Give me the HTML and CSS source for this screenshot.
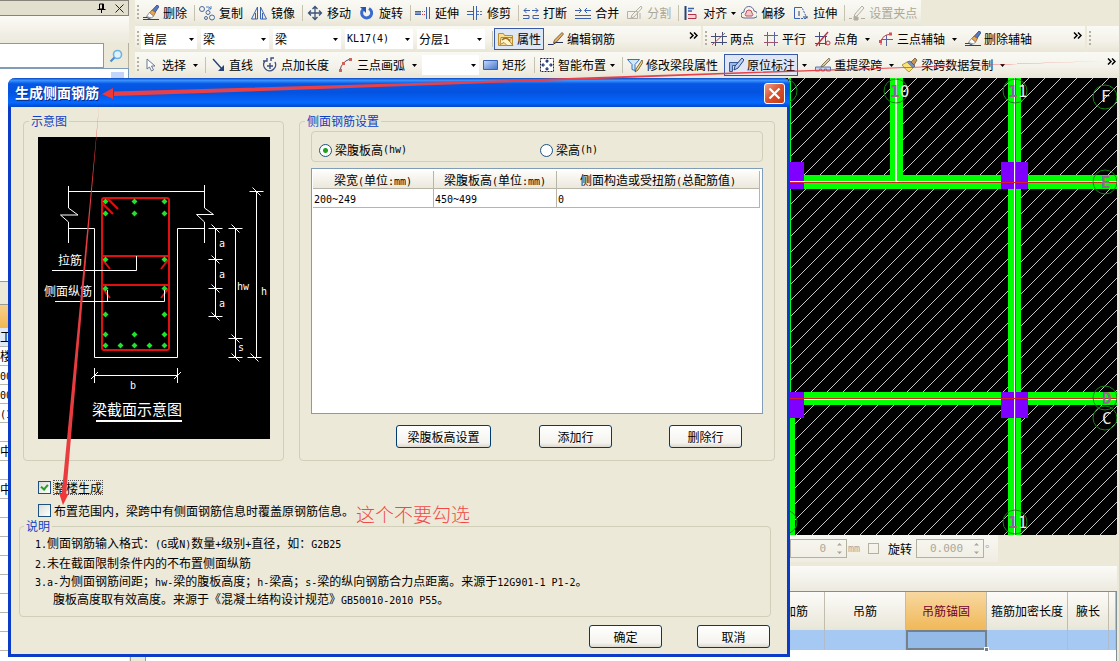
FILE: index.html
```
<!DOCTYPE html>
<html lang="zh-CN">
<head>
<meta charset="utf-8">
<title>生成侧面钢筋</title>
<link rel="stylesheet" href="styles.css">
</head>
<body>
<svg class="defs" width="0" height="0" aria-hidden="true">
  <defs>
    <symbol id="caret" viewBox="0 0 5 3"><path d="M0 0h5L2.500 3z" fill="#000"/></symbol>
    <symbol id="more" viewBox="0 0 9 7"><path d="M1 .5l3 3-3 3M5 .5l3 3-3 3" fill="none" stroke="#000" stroke-width="1.500"/></symbol>
    <symbol id="brush" viewBox="0 0 16 16"><path d="M14 0l2 1.500-5 7.500-3-2.500z" fill="#5a7ac0" stroke="#28407c" stroke-width=".8"/><path d="M9 5l3.500 2.500-2 3.500-4-3z" fill="#e8a858" stroke="#8a5a28" stroke-width=".7"/><path d="M6.500 7.500l4 3.500-2 2-5-1.500z" fill="#fff" stroke="#777" stroke-width=".8"/><path d="M0 12.500l4 0 4 2H16M0 14.500h9" fill="none" stroke="#28407c"/></symbol>
    <symbol id="pen" viewBox="0 0 16 16"><path d="M14 1.500l1.500 1.500-7 8-3 1 1-3z" fill="#e0b070" stroke="#6a4a20" stroke-width=".8"/><path d="M0 13.500h5l3-2h7" fill="none" stroke="#28305c"/></symbol>
    <g id="tick"><path d="M-7 0H7M-4 -4L4 4" /></g>
    <path id="dot" d="M0-3L3 0 0 3-3 0z"/>
  </defs>
</svg>

<div class="app">
  <aside class="side">
    <div class="side-title">
      <button aria-label="固定"><svg width="9" height="10" viewBox="0 0 9 10"><path d="M2.500 1h4v5h-4zM.5 6.500h8M4.500 7v3M5.500 1v5" fill="none" stroke="#000"/></svg></button>
      <button aria-label="关闭面板"><svg width="9" height="9" viewBox="0 0 9 9"><path d="M.5.5l8 8M8.500.5l-8 8" stroke="#222"/></svg></button>
    </div>
    <div class="side-gap"></div>
    <div class="side-search">
      <input type="text" aria-label="搜索构件">
      <button aria-label="搜索"><svg width="14" height="14" viewBox="0 0 14 14"><circle cx="8.500" cy="5.500" r="4" fill="#dff2fc" stroke="#6cb4e4" stroke-width="1.600"/><path d="M5.500 8.500L1.500 12.500" stroke="#4a8cd0" stroke-width="2.200"/></svg></button>
    </div>
    <div class="side-list"><span class="scroll-up"><svg width="7" height="4" viewBox="0 0 7 4"><path d="M.5 3.500l3-3 3 3" fill="none" stroke="#3c5a9c" stroke-width="1.500"/></svg></span></div>
    <div class="side-bar"></div>
    <table class="props">
      <tbody>
        <tr class="props-head"><th></th></tr>
        <tr class="current"><td>工</td></tr>
        <tr><td>楼层</td></tr>
        <tr><td><span class="m">00</span></td></tr>
        <tr><td><span class="m">00</span></td></tr>
        <tr><td><span class="m">(10</span></td></tr>
        <tr><td></td></tr>
        <tr><td>中</td></tr>
        <tr><td></td></tr>
        <tr><td>中</td></tr>
        <tr><td></td></tr><tr><td></td></tr><tr><td></td></tr><tr><td></td></tr>
        <tr><td></td></tr><tr><td></td></tr><tr><td></td></tr><tr><td></td></tr>
      </tbody>
    </table>
  </aside>

  <main class="main">
    <div class="bar edit-bar">
      <div class="strip" role="toolbar" aria-label="编辑">
        <i class="grip"></i>
        <button class="tool"><svg><use href="#brush"/></svg>删除</button><i class="sep"></i>
        <button class="tool"><svg viewBox="0 0 16 16" fill="none" stroke="#4a6a9c"><circle cx="3" cy="4" r="2.500"/><circle cx="9" cy="7.500" r="2"/><circle cx="13" cy="12.500" r="2.500"/><circle cx="7" cy="13" r="1.500"/><path d="M7 2h3l2 2M12 1v3H9" stroke="#5a80c8"/></svg>复制</button>
        <button class="tool"><svg viewBox="0 0 16 16" fill="none" stroke="#3a62b0"><path d="M6.500 2v12h-6zM9.500 2v12h6zM4.500 8v6M11.500 8v6"/></svg>镜像</button><i class="sep"></i>
        <button class="tool"><svg viewBox="0 0 16 16" fill="none" stroke="#3c5478" stroke-width="1.300"><path d="M8 2v12M2 8h12M5.500 4L8 1.500 10.500 4M5.500 12L8 14.500 10.500 12M4 5.500L1.500 8 4 10.500M12 5.500L14.500 8 12 10.500"/></svg>移动</button>
        <button class="tool"><svg viewBox="0 0 16 16"><path d="M4 4.500a5 5 0 1 0 6-1" fill="none" stroke="#3a6ad0" stroke-width="3"/><path d="M1 2h6v6z" fill="#2a52b0"/></svg>旋转</button><i class="sep"></i>
        <button class="tool"><svg viewBox="0 0 16 16" fill="none" stroke="#3a62b0"><path d="M0 6.500h6M0 9.500h6M11.500 2v12M14.500 2v12"/><path d="M0 8h6" stroke="#28407c"/><path d="M7 6.500h4M7 9.500h4" stroke="#c04040" stroke-dasharray="1 1"/></svg>延伸</button>
        <button class="tool"><svg viewBox="0 0 16 16" fill="none" stroke="#3a62b0"><path d="M0 6.500h6M0 9.500h6M6.500 1v14M9.500 1v14"/><path d="M10 6.500h6M10 9.500h6" stroke="#5a7aa8" stroke-dasharray="2 1"/></svg>修剪</button><i class="sep"></i>
        <button class="tool"><svg viewBox="0 0 16 16" fill="none" stroke="#3a62b0"><path d="M0 10.500h6v3H0M16 10.500h-6v3h6M1 5.500h6M9 5.500h6M3.500 3L1 5.500 3.500 8M12.500 3L15 5.500 12.500 8"/></svg>打断</button>
        <button class="tool"><svg viewBox="0 0 16 16" fill="none" stroke="#3a62b0"><path d="M0 10.500h16M0 13.500h16M0 5.500h6M10 5.500h6M4 3l2.500 2.500L4 8M12 3L9.500 5.500 12 8"/></svg>合并</button>
        <button class="tool" disabled><svg viewBox="0 0 16 16" fill="none" stroke="#b4b2a4"><path d="M.5 6.500h10v7H.5zM14 1L5 10l-1 3 3-1 8-9zM13 8v6"/></svg>分割</button><i class="sep"></i>
        <button class="tool tight"><svg viewBox="0 0 16 16"><path d="M2.500 1v14" stroke="#28407c" stroke-width="2"/><path d="M5 3.500h6M5 6h4" stroke="#3a62b0" stroke-width="1.500"/><path d="M5 9.500h8v4H5" fill="#f4d8d8" stroke="#b03048"/></svg>对齐<svg class="caret"><use href="#caret"/></svg></button>
        <button class="tool"><svg viewBox="0 0 16 16" fill="none"><path d="M3 13a3 3 0 0 1 0-6 5 5 0 0 1 10-1 3.500 3.500 0 0 1 0 7z" stroke="#5a6a94"/><path d="M5 11a2 2 0 0 1 0-3 3 3 0 0 1 6 0 2 2 0 0 1 0 3z" stroke="#c05060" fill="#f0c8c8"/></svg>偏移</button>
        <button class="tool"><svg viewBox="0 0 16 16" fill="none" stroke="#3a62b0"><path d="M7 2.500H1.500v11H7"/><path d="M7 2.500h2l5 11H7" stroke-dasharray="2 1"/><path d="M6 6v5M10 12h5" stroke="#28407c"/></svg>拉伸</button><i class="sep"></i>
        <button class="tool" disabled><svg viewBox="0 0 16 16" fill="none" stroke="#b0aea0"><path d="M13 1L6 9l-1 3 3-1 7-8zM0 13.500h3M12 13.500h4"/><path d="M5 12h4v3H5z" fill="#b0aea0"/></svg>设置夹点</button>
      </div>
    </div>

    <div class="bar">
      <div class="strip strip-member" role="toolbar" aria-label="构件">
        <i class="grip"></i>
        <span class="combo combo-floor"><select aria-label="楼层"><option>首层</option></select><svg class="caret"><use href="#caret"/></svg></span>
        <span class="combo"><select aria-label="构件大类"><option>梁</option></select><svg class="caret"><use href="#caret"/></svg></span>
        <span class="combo"><select aria-label="构件类型"><option>梁</option></select><svg class="caret"><use href="#caret"/></svg></span>
        <span class="combo latin"><select aria-label="构件名称"><option>KL17(4)</option></select><svg class="caret"><use href="#caret"/></svg></span>
        <span class="combo"><select aria-label="分层"><option>分层1</option></select><svg class="caret"><use href="#caret"/></svg></span>
        <i class="sep"></i>
        <button class="tool pressed"><svg viewBox="0 0 16 16"><path d="M.5 2.500h5l1 2h8v10H.5z" fill="#f8e090" stroke="#b89030"/><path d="M3 6.500h11l-3 3 4 5H9l-3-3-4 2z" fill="#fff4c8" stroke="#a06c20" stroke-width=".8"/><path d="M4 9q4-4 8 1" fill="none" stroke="#a06c20" stroke-width="1.500"/></svg>属性</button>
        <button class="tool"><svg><use href="#pen"/></svg>编辑钢筋</button>
        <button class="more" aria-label="更多"><svg><use href="#more"/></svg></button>
      </div>
      <div class="strip strip-axis" role="toolbar" aria-label="辅助轴线">
        <i class="grip"></i>
        <button class="tool"><svg viewBox="0 0 16 16" fill="none" stroke="#444c78"><path d="M4.500 2v13M11.500 1v13M0 5.500h16M0 11.500h16"/><path d="M1 14L14 2" stroke="#a06060"/></svg>两点</button>
        <button class="tool"><svg viewBox="0 0 16 16" fill="none" stroke="#5a62a0"><path d="M4.500 1v14M11.500 1v14"/><path d="M1 4.500h14M1 11.500h14" stroke="#a05070"/></svg>平行</button>
        <button class="tool split"><svg viewBox="0 0 16 16" fill="none" stroke="#444c88"><path d="M4.500 1v14M0 5.500h12M0 12.500h10M10.500 6v8"/><path d="M1 15L13 1" stroke="#c03040" stroke-width="1.400"/><circle cx="13" cy="12" r="2" stroke="#c03040"/></svg>点角<svg class="caret"><use href="#caret"/></svg></button>
        <button class="tool split"><svg viewBox="0 0 16 16" fill="none" stroke="#5a62a0"><path d="M8.500 4v11M3 8.500h12"/><path d="M3 14Q2 4 13 3" stroke="#c04858"/><path d="M1 9h3v3H1zM11 1.500h3v3h-3z" fill="#d05060" stroke="none"/></svg>三点辅轴<svg class="caret"><use href="#caret"/></svg></button>
        <button class="tool"><svg><use href="#brush"/></svg>删除辅轴</button>
        <button class="more" aria-label="更多"><svg><use href="#more"/></svg></button>
      </div>
      <div class="strip strip-rest"><i class="grip"></i></div>
    </div>

    <div class="bar">
      <div class="strip strip-draw" role="toolbar" aria-label="绘图">
        <i class="grip"></i>
        <button class="tool split"><svg viewBox="0 0 16 16"><path d="M4 2v10l2.500-2 2 4 2-1-2-4h3.500z" fill="#fff" stroke="#687890"/></svg>选择<svg class="caret"><use href="#caret"/></svg></button><i class="sep"></i>
        <button class="tool"><svg viewBox="0 0 16 16"><path d="M3 2l9 10" stroke="#28407c" stroke-width="1.400"/><path d="M14 8v6H8z" fill="#28407c"/></svg>直线</button>
        <button class="tool"><svg viewBox="0 0 16 16" fill="none" stroke="#3c5080" stroke-width="1.400"><path d="M3 4a6 6 0 1 0 10 1M8 6v6M5 9h6M1 4h4V1M9 4V1h3"/></svg>点加长度</button>
        <button class="tool split"><svg viewBox="0 0 16 16"><path d="M2 14Q3 5 12 2" fill="none" stroke="#605060"/><path d="M1 12h3v3H1zM4 5h3v3H4zM11 1h3v3h-3z" fill="#d06058"/></svg>三点画弧<svg class="caret"><use href="#caret"/></svg></button>
        <span class="combo combo-arc"><select aria-label="弧线方式"><option></option></select><svg class="caret"><use href="#caret"/></svg></span>
        <button class="tool"><svg viewBox="0 0 16 16"><defs><linearGradient id="rectfill" x2="1" y2="1"><stop stop-color="#c8dcfa"/><stop offset="1" stop-color="#4474cc"/></linearGradient></defs><path d="M.5 3.500h14v9H.5z" fill="url(#rectfill)" stroke="#3a62b0"/></svg>矩形</button><i class="sep"></i>
        <button class="tool tight"><svg viewBox="0 0 16 16"><path d="M1.500 1.500h13v13h-13z" fill="#fff" stroke="#223" stroke-dasharray="2 1"/><path d="M8 3v3M8 10v3M3 8h3M10 8h3M6.500 4.500L8 3l1.500 1.500M6.500 11.500L8 13l1.500-1.500M4.500 6.500L3 8l1.500 1.500M11.500 6.500L13 8l-1.500 1.500" fill="none" stroke="#28407c" stroke-width="1.200"/></svg>智能布置<svg class="caret"><use href="#caret"/></svg></button><i class="sep"></i>
        <button class="tool"><svg viewBox="0 0 16 16"><path d="M.5 2.500h12l-4.500 5v6l-3-1v-5z" fill="#cfe8fa" stroke="#3a72b8"/><path d="M15 3l-6 9-1 3 3-2 5-8z" fill="#f0d888" stroke="#604820" stroke-width=".8"/></svg>修改梁段属性</button>
        <button class="tool pressed"><svg viewBox="0 0 16 16"><path d="M1.500 5.500h9v3h-6v6h-3z" fill="#9cb8e8" stroke="#3a5a98"/><path d="M14 1L7 9l-1 4 4-2 6-8z" fill="#b8d0f4" stroke="#28407c"/></svg>原位标注</button>
        <button class="tool caret-only" aria-label="原位标注选项"><svg class="caret"><use href="#caret"/></svg></button>
        <button class="tool split"><svg viewBox="0 0 16 16"><path d="M.5 14v-4h15v4h-4v-2h-2v2h-3v-2h-2v2z" fill="#c4d4ec" stroke="#5a78a8"/><path d="M14 1L7 8l-1 2 3-1 6-6z" fill="#d8c8a0" stroke="#706040" stroke-width=".8"/></svg>重提梁跨<svg class="caret"><use href="#caret"/></svg></button>
        <button class="tool split"><svg viewBox="0 0 16 16"><path d="M13 1l2 2-3 5-3-3z" fill="#c89858" stroke="#604820" stroke-width=".7"/><path d="M8 4l5 5-2 2-6-6z" fill="#7890b8" stroke="#405078" stroke-width=".7"/><path d="M5 5l6 6-4 4Q3 12 0 8z" fill="#fae078" stroke="#a08020" stroke-width=".8"/></svg>梁跨数据复制<svg class="caret"><use href="#caret"/></svg></button>
        <button class="more" aria-label="更多"><svg><use href="#more"/></svg></button>
      </div>
    </div>

    <svg class="canvas" viewBox="130 78 987 457" preserveAspectRatio="xMaxYMin slice" role="img" aria-label="梁平面图">
      <defs>
        <pattern id="hatch" width="16" height="16" patternUnits="userSpaceOnUse" patternTransform="translate(3 0)">
          <path d="M-1 17L17-1M-1 1L1-1M15 17L17 15" stroke="#c8c8c8"/>
        </pattern>
      </defs>
      <rect x="130" y="78" width="987" height="600" fill="#000"/>
      <rect x="130" y="78" width="987" height="600" fill="url(#hatch)"/>
      <g fill="#00ff00">
        <path d="M789 78h2v320h-2zM782 418h13v260h-13z"/>
        <path d="M890 78h13v100h-13zM130 175h987v14H130zM130 392h987v13H130zM1008 78h13v600h-13z"/>
      </g>
      <path d="M896 78v103" stroke="#e8f4e0" stroke-width="2"/>
      <path d="M130 181.500h987M130 399.500h987M1014.500 78v600" stroke="#fff" fill="none"/>
      <g fill="#8000ff"><path d="M777 162h27v27h-27zM1001 162h27v27h-27zM777 392h27v26h-27zM1001 392h27v26h-27z"/></g>
      <path d="M777 181.500h27M1014.500 162v27M1014.500 392v26" stroke="#fff"/>
      <path d="M130 182.500h987M130 398.500h987M1015.500 78v600" stroke="#d82020" fill="none"/>
      <g fill="none" stroke="#148414">
        <circle cx="785" cy="91" r="12"/><circle cx="896" cy="91" r="12"/><circle cx="1015" cy="91" r="12"/>
        <circle cx="1105" cy="97" r="12"/><circle cx="1105" cy="182" r="12"/><circle cx="1105" cy="398" r="12"/><circle cx="1105" cy="418" r="12"/>
        <circle cx="785" cy="522" r="12"/><circle cx="1015" cy="522" r="12"/>
      </g>
      <g class="axis">
        <text x="890" y="97"><tspan class="dim">1</tspan>0</text>
        <text x="1008" y="97"><tspan class="dim">1</tspan>1</text>
        <text x="1008" y="528"><tspan class="dim">1</tspan>1</text>
        <text x="1101" y="102">F</text>
        <text x="1101" y="188" class="dim">E</text>
        <text x="1102" y="404" class="dim">D</text>
        <text x="1102" y="424">C</text>
      </g>
    </svg>

    <div class="status">
      <div class="status-strip">
        <span class="spin spin-offset"><input type="text" value="0" aria-label="偏移" disabled><svg width="5" height="13" viewBox="0 0 5 13"><path d="M0 3.500L2.500 1 5 3.500zM0 9.500h5L2.500 12z" fill="#a8a698"/></svg></span>
        <span class="unit m">mm</span>
        <label class="rotate"><input type="checkbox">旋转</label>
        <span class="spin spin-angle"><input type="text" value="0.000" aria-label="旋转角度" disabled><svg width="5" height="13" viewBox="0 0 5 13"><path d="M0 3.500L2.500 1 5 3.500zM0 9.500h5L2.500 12z" fill="#a8a698"/></svg></span>
        <span class="unit">°</span>
      </div>
    </div>
    <div class="lower-bar"></div>
    <div class="lower">
      <table class="spans">
        <colgroup><col><col class="c-mid"><col class="c-mid"><col class="c-mid"><col class="c-mid"><col class="c-short"><col class="c-end"></colgroup>
        <thead><tr><th></th><th>次梁加筋</th><th>吊筋</th><th class="hot">吊筋锚固</th><th>箍筋加密长度</th><th>腋长</th><th></th></tr></thead>
        <tbody><tr><td></td><td></td><td></td><td class="active"><i class="handle"></i></td><td></td><td></td><td></td></tr></tbody>
      </table>
      <i class="scroll-end"></i>
    </div>
  </main>
</div>

<section class="dialog" role="dialog" aria-labelledby="dlg-title">
  <header class="titlebar">
    <h1 id="dlg-title">生成侧面钢筋</h1>
    <button class="close" aria-label="关闭"><svg width="13" height="13" viewBox="0 0 13 13"><path d="M1.500 1.500l10 10M11.500 1.500l-10 10" stroke="#fff" stroke-width="2.200"/></svg></button>
  </header>
  <div class="dialog-body">
    <div class="panels">
      <fieldset class="group preview">
        <legend>示意图</legend>
        <svg class="diagram" width="232" height="302" viewBox="38 137 232 302" role="img" aria-label="梁截面示意图">
          <rect x="38" y="137" width="232" height="302" fill="#000"/>
          <g fill="none" stroke="#fff">
            <path d="M68.500 191.500h136M68.500 186v22l9.500 7H60.500l8 7v21M204.500 185v23l9 6.500h-17l8 7.500v21"/>
            <path d="M68.500 228.500h26v129h83v-129h27"/>
          </g>
          <g fill="none" stroke="#e01010" stroke-width="2">
            <rect x="102" y="198" width="67" height="152" rx="2"/>
            <path d="M102 256h67M102 285h67M107 198l11 11M102 203l11 11M103 260l7 9M168 260l-7 9M103 289l7 9M168 289l-7 9"/>
          </g>
          <g fill="#20e030">
            <use href="#dot" x="105.500" y="201.500"/><use href="#dot" x="134.500" y="201.500"/><use href="#dot" x="164.500" y="201.500"/>
            <use href="#dot" x="105.500" y="213.500"/><use href="#dot" x="134.500" y="213.500"/><use href="#dot" x="164.500" y="213.500"/>
            <use href="#dot" x="105.500" y="259.500"/><use href="#dot" x="164.500" y="259.500"/>
            <use href="#dot" x="105.500" y="288.500"/><use href="#dot" x="164.500" y="288.500"/>
            <use href="#dot" x="105.500" y="314.500"/><use href="#dot" x="164.500" y="314.500"/>
            <use href="#dot" x="105.500" y="334.500"/><use href="#dot" x="134.500" y="334.500"/><use href="#dot" x="164.500" y="334.500"/>
            <use href="#dot" x="105.500" y="345.500"/><use href="#dot" x="120.500" y="345.500"/><use href="#dot" x="134.500" y="345.500"/><use href="#dot" x="149.500" y="345.500"/><use href="#dot" x="164.500" y="345.500"/>
          </g>
          <g fill="none" stroke="#fff">
            <path d="M52 270.500h84.500V256M55 301.500h109.500V290M107.500 301V290"/>
            <path d="M215.500 228v88M235.500 228v130M256.500 191v167M94.500 375.500h83M94.500 368v15M177.500 368v15M91 379l7-7M174 379l7-7"/>
            <use href="#tick" x="215.500" y="228.500"/><use href="#tick" x="215.500" y="259.500"/><use href="#tick" x="215.500" y="288.500"/><use href="#tick" x="215.500" y="316.500"/>
            <use href="#tick" x="235.500" y="228.500"/><use href="#tick" x="235.500" y="338.500"/><use href="#tick" x="235.500" y="357.500"/>
            <use href="#tick" x="256.500" y="191.500"/><use href="#tick" x="254.500" y="357.500"/>
            <path d="M96 421h86" stroke-width="2"/>
          </g>
          <g class="diagram-text">
            <text x="58" y="265">拉筋</text><text x="44" y="296">侧面纵筋</text>
            <g class="diagram-latin">
              <text x="219" y="247">a</text><text x="219" y="278">a</text><text x="219" y="307">a</text>
              <text x="237" y="290">hw</text><text x="261" y="295">h</text><text x="238" y="351">s</text><text x="130" y="389">b</text>
            </g>
            <text class="diagram-title" x="92" y="415">梁截面示意图</text>
          </g>
        </svg>
      </fieldset>

      <fieldset class="group settings">
        <legend>侧面钢筋设置</legend>
        <div class="modes">
          <label><input type="radio" name="mode" checked>梁腹板高<span class="m">(hw)</span></label>
          <label><input type="radio" name="mode">梁高<span class="m">(h)</span></label>
        </div>
        <div class="grid-box">
          <table class="grid">
            <colgroup><col class="g-width"><col class="g-height"><col></colgroup>
            <thead><tr><th>梁宽<span class="m">(</span>单位<span class="m">:mm)</span></th><th>梁腹板高<span class="m">(</span>单位<span class="m">:mm)</span></th><th>侧面构造或受扭筋<span class="m">(</span>总配筋值<span class="m">)</span></th></tr></thead>
            <tbody><tr><td><span class="m">200~249</span></td><td><span class="m">450~499</span></td><td><span class="m">0</span></td></tr></tbody>
          </table>
        </div>
        <div class="grid-actions">
          <button class="btn btn-wide">梁腹板高设置</button>
          <button class="btn">添加行</button>
          <button class="btn">删除行</button>
        </div>
      </fieldset>
    </div>

    <div class="checks">
      <label><input type="checkbox" checked><span class="focus">整楼生成</span></label>
      <label><input type="checkbox"><span>布置范围内，梁跨中有侧面钢筋信息时覆盖原钢筋信息。</span></label>
    </div>

    <fieldset class="group notes">
      <legend>说明</legend>
      <p class="first"><span class="m">1.</span>侧面钢筋输入格式：<span class="m">(G</span>或<span class="m">N)</span>数量<span class="m">+</span>级别<span class="m">+</span>直径，如：<span class="m">G2B25</span></p>
      <p><span class="m">2.</span>未在截面限制条件内的不布置侧面纵筋</p>
      <p><span class="m">3.a-</span>为侧面钢筋间距；<span class="m">hw-</span>梁的腹板高度；<span class="m">h-</span>梁高；<span class="m">s-</span>梁的纵向钢筋合力点距离。来源于<span class="m">12G901-1 P1-2</span>。</p>
      <p class="cont">腹板高度取有效高度。来源于《混凝土结构设计规范》<span class="m">GB50010-2010 P55</span>。</p>
    </fieldset>

    <footer class="dialog-actions">
      <button class="btn">确定</button>
      <button class="btn">取消</button>
    </footer>
  </div>
</section>

<svg class="marks" width="1119" height="661" viewBox="0 0 1119 661" aria-hidden="true">
  <path d="M1105 61L746 72 450 82 114 91.500v4.500L450 84.500 746 73.500z" fill="#e84048"/>
  <path d="M102 94l11-6v11z" fill="#f03838"/>
  <path d="M99 107L61.500 496h4.500z" fill="#e83c40"/>
  <path d="M63 505l-4-12 9.500 1z" fill="#f03838"/>
</svg>
<p class="remark">这个不要勾选</p>
</body>
</html>
```

FILE: styles.css
```
* { box-sizing: border-box; }

body {
  margin: 0;
  height: 100vh;
  overflow: hidden;
  position: relative;
  background: #ece9d8;
  color: #000;
  font: 12px/14px "Noto Sans CJK SC", sans-serif;
}

button, input, select {
  margin: 0;
  padding: 0;
  border: 0;
  background: none;
  color: inherit;
  font: inherit;
}

table { border-collapse: separate; border-spacing: 0; table-layout: fixed; width: 100%; }
th, td { padding: 0; font-weight: normal; white-space: nowrap; overflow: hidden; }
svg { flex: none; display: block; }
.defs { position: absolute; }
.m { font-family: "DejaVu Sans Mono", monospace; font-size: 10px; line-height: 1; }

.app { display: flex; height: 100%; }

/* side panel */
.side { flex: none; width: 129px; overflow: hidden; background: #fff; }
.side-title {
  display: flex;
  justify-content: flex-end;
  align-items: center;
  gap: 9px;
  height: 16px;
  padding: 0 4px 0 0;
  background: #e2dfce;
  border: 1px solid #85837a;
  border-left: 0;
}
.side-gap { height: 27px; background: linear-gradient(#fbfaf6, #ece9dc); }
.side-search { display: flex; height: 26px; background: #ece9d8; border-bottom: 1px solid #7f9db9; }
.side-search input { flex: 1; min-width: 0; background: #fff; border: 1px solid #7f9db9; border-left: 0; }
.side-search button { width: 25px; display: grid; place-items: center; border-right: 1px solid #b4b09c; }
.side-list { height: 212px; padding: 3px 4px; display: flex; justify-content: flex-end; border-right: 1px solid #7f9db9; }
.scroll-up { width: 13px; height: 16px; display: grid; place-items: center; background: #c4d4fa; }
.side-bar { height: 24px; background: #ece9d8; border: 1px solid #9c9a8c; border-width: 1px 0; }
.props th { height: 23px; background: linear-gradient(#f8d08c, #f0b850); }
.props td { height: 19px; line-height: 18px; border-bottom: 1px solid #b8b6aa; }
.props .current td { background: #dfe8f6; }

/* toolbars */
.main { flex: 1; min-width: 0; display: flex; flex-direction: column; padding-left: 1px; }
.bar { flex: none; display: flex; height: 26px; padding-left: 5px; gap: 2px; }
.strip {
  display: flex;
  align-items: center;
  height: 26px;
  padding-left: 2px;
  background: linear-gradient(#fafaf5, #f3f1e8 60%, #e9e6d6);
}
.grip {
  flex: none;
  width: 2px;
  height: 16px;
  background: repeating-linear-gradient(#b4b1a0 0 2px, transparent 2px 4px);
}
.tool {
  flex: none;
  display: flex;
  align-items: center;
  gap: 3px;
  height: 22px;
  padding: 0 5px 0 4px;
  white-space: nowrap;
}
.tool svg { width: 16px; height: 16px; }
.tool .caret, .combo .caret { width: 5px; height: 3px; }
.tool:disabled { color: #aca899; }
.split { padding-right: 4px; }
.split .caret { margin-left: 4px; }
.tight { padding-right: 4px; }
.tight .caret { margin-left: 1px; }
.caret-only { padding: 0 4px; }
.pressed { padding: 0 2px 0 3px; margin-left: 1px; background: #dfe6f4; border: 1px solid #3a5aa8; }
.sep { flex: none; width: 1px; height: 16px; margin-left: 3px; background: #c5c2b0; }
.edit-bar .tool { gap: 4px; padding-right: 4px; }
.edit-bar .tight { padding-right: 1px; }
.edit-bar .tight .caret { margin-left: 0; }

.combo { flex: none; display: grid; align-items: center; width: 68px; height: 20px; margin-right: 4px; background: #fff; }
.combo > * { grid-area: 1 / 1; }
.combo select { appearance: none; width: 100%; height: 20px; padding-left: 2px; line-height: 18px; }
.combo .caret { justify-self: end; margin-right: 3px; pointer-events: none; }
.combo-floor { width: 56px; margin-left: 2px; }
.combo-arc { width: 57px; margin: 0 0 0 1px; }
.latin { font-family: "DejaVu Sans Mono", monospace; font-size: 10px; }

.more { margin: -8px 3px 0 auto; }
.more svg { width: 9px; height: 7px; }
.strip-member { flex: none; width: 566px; }
.strip-axis { flex: none; width: 382px; }
.strip-rest, .strip-draw { flex: 1; min-width: 0; }

/* drawing area */
.canvas { flex: 1; min-height: 0; width: calc(100% - 2px); background: #000; }
.axis { font: 16px "DejaVu Sans Mono", monospace; fill: #e8e8e8; }
.axis .dim { fill: #94688c; font-weight: bold; }

/* lower part */
.status { flex: none; height: 31px; }
.status-strip {
  display: flex;
  align-items: center;
  width: 868px;
  height: 27px;
  padding-left: 660px;
  background: linear-gradient(#f8f7f2, #efede2);
}
.spin {
  flex: none;
  display: flex;
  align-items: center;
  width: 57px;
  height: 19px;
  padding-right: 4px;
  border: 1px solid #b4b1a0;
  color: #aca899;
  font: 11px "DejaVu Sans Mono", monospace;
}
.spin input { flex: 1; min-width: 0; text-align: right; padding-right: 11px; }
.spin-angle { width: 68px; }
.unit { color: #aca899; padding: 0 1px; }
.rotate { display: flex; align-items: center; gap: 9px; padding: 0 4px 0 7px; }
.rotate input { appearance: none; width: 11px; height: 11px; border: 1px solid #b4b1a0; }
.lower-bar { flex: none; height: 25px; margin-right: 2px; background: linear-gradient(#fbfaf7, #eceadf); }
.lower {
  flex: none;
  display: flex;
  flex-direction: column;
  justify-content: space-between;
  height: 70px;
  margin-right: 2px;
  background: #fff;
  border-top: 1px solid #7f8f98;
  border-right: 1px solid #7f8f98;
}
.scroll-end { width: 16px; height: 5px; background: #ece9d8; border: 1px solid #9c9a8c; border-width: 0 1px; }
.c-mid { width: 81px; }
.c-short { width: 41px; }
.c-end { width: 7px; }
.spans th { height: 38px; background: linear-gradient(#fcfbf8, #e9e6d8); border-right: 1px solid #c0bdae; }
.spans .hot { background: linear-gradient(#f8d8a0, #f0b858); color: #700030; }
.spans td { height: 20px; background: #a5c9f3; border-right: 1px solid #b0bccb; }
.spans .active { position: relative; overflow: visible; background: #94bbe8; border: 2px solid #76808a; }
.handle { position: absolute; right: -4px; bottom: -4px; width: 5px; height: 5px; background: #76808a; border: 1px solid #fff; }

/* dialog window */
.dialog {
  position: absolute;
  left: 8px;
  top: 78px;
  width: 782px;
  background: #ece9d8;
  border: solid #0a3cc8;
  border-width: 0 3px 3px;
  border-radius: 7px 7px 0 0;
}
.titlebar {
  display: flex;
  justify-content: space-between;
  align-items: center;
  height: 29px;
  margin: 0 -3px;
  padding: 2px 5px 0 7px;
  border-radius: 7px 7px 0 0;
  background: linear-gradient(#0a48c0, #3c94ff 8%, #0658e4 20%, #0453e0 50%, #0468ff 85%, #0246c8);
}
.titlebar h1 { margin: 0 0 3px; color: #fff; font-size: 14px; line-height: 18px; font-weight: bold; text-shadow: 1px 1px #0a2a80; }
.close {
  display: grid;
  place-items: center;
  width: 21px;
  height: 21px;
  border: 1px solid #fff;
  border-radius: 3px;
  background: linear-gradient(135deg, #f0a088, #d8502c 50%, #c03c14);
}
.dialog-body { padding: 7px 0 6px; }
.panels { display: flex; gap: 15px; padding: 0 12px; }
.group {
  min-width: 0;
  margin: 0;
  padding: 0;
  border: 1px solid #d0cfba;
  border-radius: 4px;
}
.group legend { padding: 0 2px; color: #0c41c4; line-height: 14px; }
.preview { flex: none; padding: 9px 13px 21px 14px; }
.preview legend { margin-left: -9px; }
.settings legend { margin-left: -6px; }
.notes legend { margin-left: -11px; }
.diagram-text { font: 12px "Noto Sans CJK SC", sans-serif; fill: #fff; }
.diagram-latin { font: 10px "DejaVu Sans Mono", monospace; }
.diagram-title { font-size: 15px; }
.settings { flex: 1; padding: 3px 11px 12px; }
.modes {
  display: grid;
  grid-template-columns: 221px 1fr;
  align-items: center;
  height: 31px;
  padding: 7px 7px 0;
  border: 1px solid #d0cfba;
  border-radius: 4px;
}
.modes label, .checks label { display: flex; align-items: center; }
.modes input {
  appearance: none;
  width: 13px;
  height: 13px;
  margin-right: 3px;
  border: 1px solid #1c5180;
  border-radius: 50%;
  background: #fff;
}
.modes input:checked { background: radial-gradient(circle, #21a121 0 2px, #fff 3px); }
.grid-box { height: 246px; margin-top: 6px; padding: 2px 2px 0 1px; background: #fff; border: 1px solid #7f9db9; }
.g-width { width: 121px; }
.g-height { width: 123px; }
.grid th { height: 18px; line-height: 16px; background: linear-gradient(#fdfcfa, #ebe8dc); border: solid #b8b5a6; border-width: 0 1px 1px 0; }
.grid td { height: 19px; padding-left: 1px; line-height: 16px; border: solid #b8b5a6; border-width: 0 1px 1px 0; }
.grid-actions { display: grid; grid-template-columns: 143px 130px 1fr; padding: 11px 0 0 85px; }
.btn {
  width: 73px;
  height: 23px;
  border: 1px solid #003c74;
  border-radius: 3px;
  background: linear-gradient(#fff, #f4f3ee 80%, #dcd8cc);
}
.btn-wide { width: 95px; }
.checks { display: grid; gap: 10px; padding: 20px 27px 0; }
.checks label { height: 13px; }
.checks input {
  appearance: none;
  position: relative;
  width: 13px;
  height: 13px;
  margin-right: 3px;
  border: 1px solid #1c5180;
  background: linear-gradient(135deg, #dcdcd6, #fff);
}
.checks input:checked::after {
  content: "";
  position: absolute;
  left: 3px;
  top: 1px;
  width: 3px;
  height: 5px;
  border: solid #21a121;
  border-width: 0 2px 2px 0;
  transform: rotate(40deg);
}
.focus { outline: 1px dotted #555; line-height: 13px; }
.notes { margin: 2px 16px 0 8px; padding: 1px 15px 8px; }
.notes p { margin: 0; line-height: 18px; white-space: nowrap; }
.notes .first { margin-bottom: 2px; }
.notes .cont { padding-left: 18px; }
.dialog-actions { display: flex; justify-content: flex-end; gap: 35px; padding: 8px 17px 0 0; }

/* annotations over the window */
.marks { position: absolute; left: 0; top: 0; pointer-events: none; }
.remark { position: absolute; left: 356px; top: 503px; margin: 0; color: #f04848; font-size: 19px; line-height: 22px; font-weight: 300; }
```
